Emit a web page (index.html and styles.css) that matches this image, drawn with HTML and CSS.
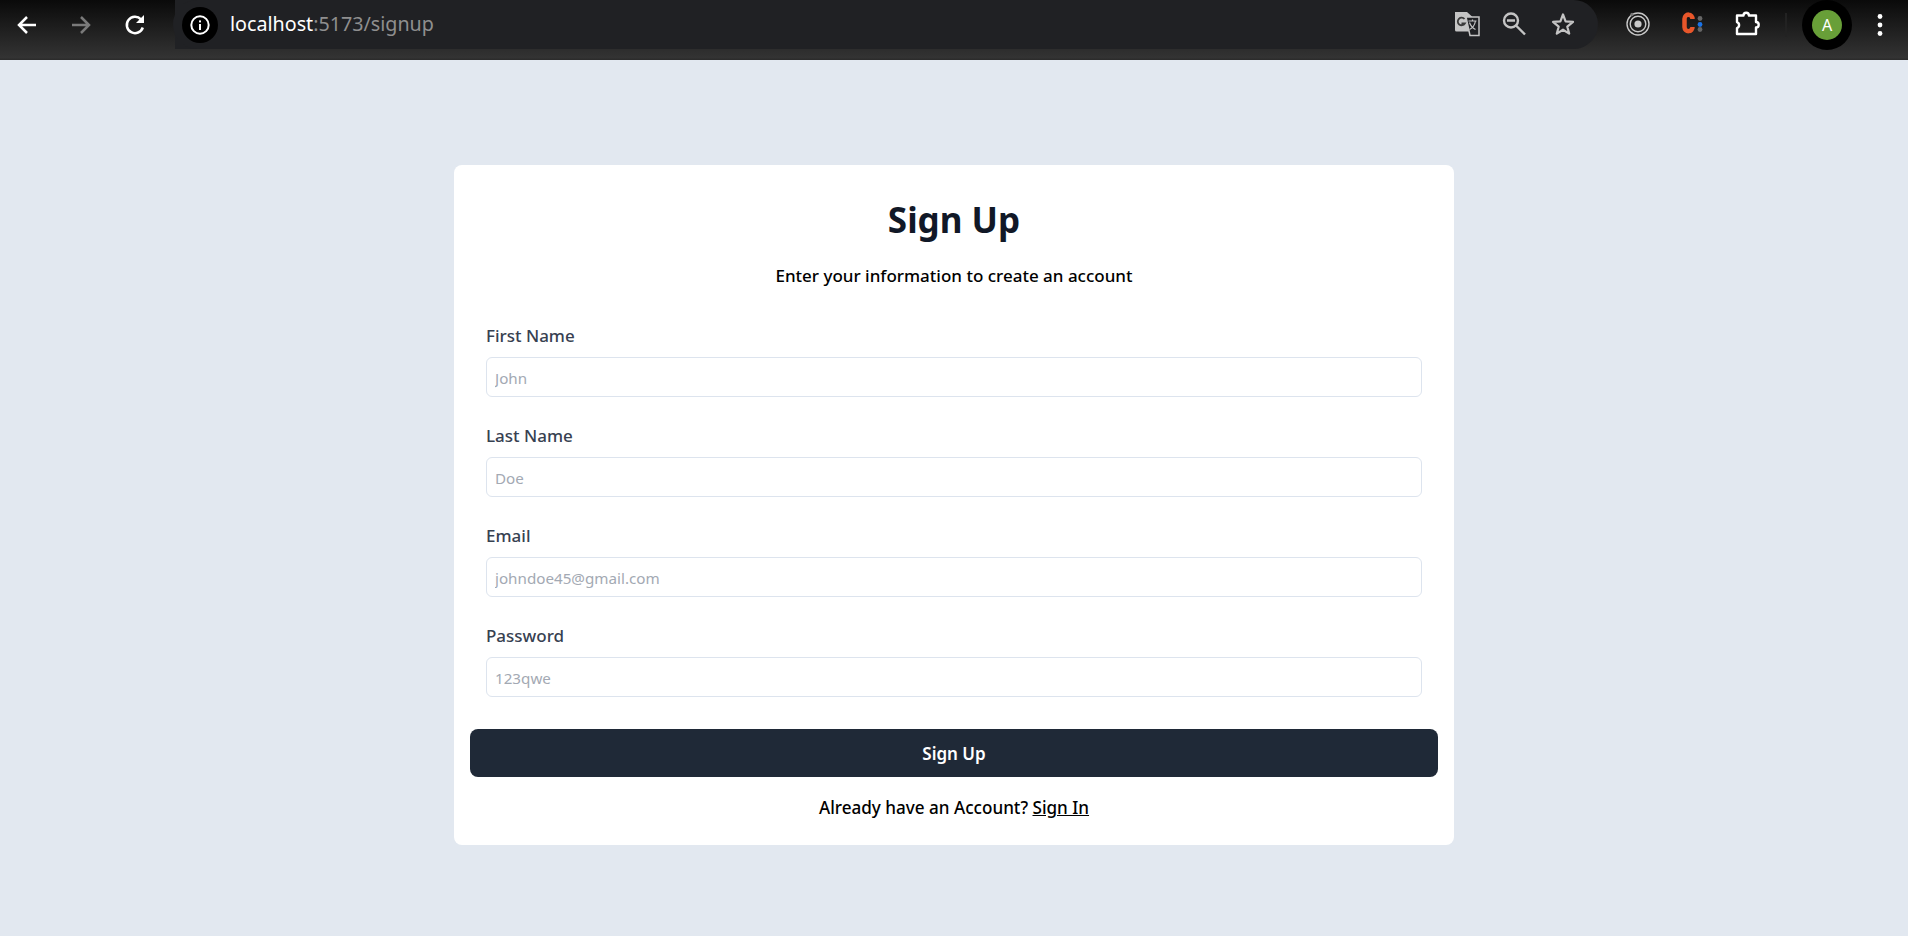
FILE: index.html
```html
<!DOCTYPE html>
<html lang="en">
<head>
<meta charset="utf-8">
<title>Sign Up</title>
<link rel="stylesheet" href="styles.css">
</head>
<body>
<header class="toolbar">
  <nav class="nav-buttons">
    <svg class="icon" viewBox="0 0 26 26"><path d="M22 13H5M13 5l-8 8 8 8" fill="none" stroke="#fff" stroke-width="2.500"/></svg>
    <svg class="icon" viewBox="0 0 26 26"><path d="M4 13h17M13 5l8 8-8 8" fill="none" stroke="#7a7a7a" stroke-width="2.500"/></svg>
    <svg class="icon" viewBox="0 0 26 26"><path d="M20.800 15.500A8.200 8.200 0 1 1 19 7.300" fill="none" stroke="#fff" stroke-width="2.500"/><path d="M22 3v8h-8z" fill="#fff"/></svg>
  </nav>
  <div class="omnibox">
    <span class="site-info"><svg viewBox="0 0 24 24" width="24" height="24"><circle cx="12" cy="12" r="8.700" fill="none" stroke="#fff" stroke-width="2"/><rect x="11" y="11" width="2" height="6" fill="#fff"/><rect x="11" y="7.400" width="2" height="2" fill="#fff"/></svg></span>
    <span class="url"><span class="host">localhost</span>:5173/signup</span>
    <span class="omni-actions">
      <svg class="icon" viewBox="0 0 26 26"><path d="M1 0h12l5 4.500v15H2.500A1.500 1.500 0 0 1 1 18z" fill="#c4c4c4"/><path d="M12 5h13v18.500H16z" fill="#202124" stroke="#c4c4c4" stroke-width="1.500"/><path d="M14.500 9h8M18.500 7.500V9M21.500 9c-.8 4-2.800 7-6 8.500M15.500 10.500c1 3 3 5.500 6 7" fill="none" stroke="#c4c4c4" stroke-width="1.200"/><path d="M10.500 7A3.800 3.800 0 1 0 10.800 11.500H7.500" fill="none" stroke="#3a3a3a" stroke-width="1.800"/></svg>
      <svg class="icon" viewBox="0 0 26 26"><circle cx="9" cy="8.500" r="7" fill="none" stroke="#c4c4c4" stroke-width="2.400"/><path d="M5 8.500h8M14 13.500l9 9" fill="none" stroke="#c4c4c4" stroke-width="2.400"/></svg>
      <svg class="icon" viewBox="0 0 26 26"><path d="M13 2.500l2.600 6.800 7.400.6-5.700 4.800 1.900 6.900-6.200-3.900-6.200 3.900 1.900-6.900L3 9.900l7.400-.6z" fill="none" stroke="#c4c4c4" stroke-width="2.200" stroke-linejoin="round"/></svg>
    </span>
  </div>
  <div class="extensions">
    <svg class="icon" viewBox="0 0 26 26"><circle cx="13" cy="12" r="11" fill="none" stroke="#c8c8c8" stroke-width="1.400"/><circle cx="13" cy="12" r="7.800" fill="none" stroke="#c8c8c8" stroke-width="1.400"/><circle cx="13" cy="12" r="3.600" fill="#c8c8c8"/><circle cx="7" cy="2.500" r="1.700" fill="#777"/></svg>
    <svg class="icon" viewBox="0 0 26 26"><path d="M13.500 7A4 4.250 0 0 0 5.500 6.750V15.250A4 4 0 0 0 13.500 15" fill="none" stroke="#e8562a" stroke-width="4.500"/><circle cx="21" cy="6.500" r="2.400" fill="#666"/><circle cx="21" cy="12.500" r="2.400" fill="#1a73e8"/><circle cx="21" cy="17.500" r="2.400" fill="#666"/></svg>
    <svg class="icon" viewBox="0 0 26 26"><path d="M4 3.500H10.500a2.700 2.700 0 0 1 5.400 0H23V10a2.700 2.700 0 0 1 0 5.400V22H4V16a3.200 3.200 0 0 0 0-6z" fill="none" stroke="#fff" stroke-width="2.400" stroke-linejoin="round"/></svg>
    <span class="divider"></span>
    <span class="avatar-ring"><span class="avatar">A</span></span>
    <svg class="menu" viewBox="0 0 6 24"><circle cx="3" cy="3.500" r="2.400" fill="#fff"/><circle cx="3" cy="12" r="2.400" fill="#fff"/><circle cx="3" cy="20.500" r="2.400" fill="#fff"/></svg>
  </div>
</header>
<main class="page">
  <form class="card">
    <h1 class="title">Sign Up</h1>
    <p class="subtitle">Enter your information to create an account</p>
    <div class="field"><label class="label">First Name</label><input class="input" placeholder="John"></div>
    <div class="field"><label class="label">Last Name</label><input class="input" placeholder="Doe"></div>
    <div class="field"><label class="label">Email</label><input class="input" placeholder="johndoe45@gmail.com"></div>
    <div class="field"><label class="label">Password</label><input class="input" placeholder="123qwe"></div>
    <button class="submit" type="button">Sign Up</button>
    <p class="footer-text">Already have an Account? <a class="link" href="#">Sign In</a></p>
  </form>
</main>
</body>
</html>
```
FILE: styles.css
```css
* { box-sizing: border-box; }
html, body { margin: 0; height: 100%; }
body {
  display: flex;
  flex-direction: column;
  height: 936px;
  overflow: hidden;
  background: #e2e8f0;
  font-family: "Noto Sans", sans-serif;
}
.toolbar {
  flex: 0 0 60px;
  display: flex;
  align-items: flex-start;
  background: linear-gradient(#0a0a0a, #333 96%, #2a2a2a);
}
.icon { width: 26px; height: 26px; flex: none; overflow: visible; }
.nav-buttons {
  width: 175px;
  height: 49px;
  display: flex;
  align-items: center;
  gap: 28px;
  padding-left: 14px;
}
.omnibox {
  width: 1423px;
  height: 49px;
  display: flex;
  align-items: center;
  background: #202124;
  border-radius: 0 25px 25px 0;
  position: relative;
}
.omnibox::before {
  content: "";
  position: absolute;
  left: -2px;
  top: 0;
  width: 30px;
  height: 49px;
  background: #202124;
  border-radius: 25px 0 0 25px;
}
.site-info {
  position: relative;
  width: 36px;
  height: 36px;
  margin-left: 7px;
  border-radius: 50%;
  background: #000;
  display: flex;
  align-items: center;
  justify-content: center;
}
.url {
  position: relative;
  margin-left: 12px;
  padding-bottom: 2px;
  font-size: 19.700px;
  color: #8f8f8f;
}
.host { color: #fff; }
.omni-actions {
  margin-left: auto;
  margin-right: 22px;
  display: flex;
  align-items: center;
  gap: 22px;
}
.extensions {
  flex: 1;
  height: 49px;
  display: flex;
  align-items: center;
  padding-left: 27px;
  gap: 28px;
}
.divider { width: 2px; height: 24px; background: #222; margin: 0 -2px; }
.avatar-ring {
  width: 50px;
  height: 50px;
  margin-left: -11px;
  border-radius: 50%;
  background: #000;
  display: flex;
  align-items: center;
  justify-content: center;
}
.avatar {
  width: 30px;
  height: 30px;
  border-radius: 50%;
  background: #689f38;
  color: #fff;
  font-size: 16px;
  display: flex;
  align-items: center;
  justify-content: center;
}
.menu { width: 6px; height: 24px; margin-left: -3px; }
.page {
  flex: 1;
  display: flex;
  justify-content: center;
  align-items: flex-start;
  padding-top: 105px;
}
.card {
  width: 1000px;
  height: 680px;
  background: #fff;
  border-radius: 8px;
  padding: 33px 16px 0;
  display: flex;
  flex-direction: column;
  align-items: center;
}
.title {
  margin: 0;
  font-size: 35px;
  line-height: 44px;
  font-weight: 700;
  color: #111827;
}
.subtitle {
  margin: 22px 0 0;
  font-size: 17px;
  line-height: 24px;
  font-weight: 500;
  color: #000;
}
.field {
  align-self: stretch;
  margin: 0 16px;
  display: flex;
  flex-direction: column;
  height: 100px;
  padding-top: 16px;
}
.subtitle + .field { margin-top: 20px; }
.label {
  font-size: 17px;
  line-height: 24px;
  font-weight: 500;
  color: #374151;
  margin-bottom: 9px;
}
.input {
  height: 40px;
  width: 100%;
  border: 1px solid #dde4ee;
  border-radius: 6px;
  padding: 1px 8px 0;
  font: 15.200px "Noto Sans", sans-serif;
  outline: none;
}
.input::placeholder { color: #a3a9b3; opacity: 1; }
.submit {
  align-self: stretch;
  height: 48px;
  margin-top: 21px;
  border: 0;
  border-radius: 8px;
  background: #1f2937;
  color: #fff;
  font: 600 17px "Noto Sans", sans-serif;
}
.footer-text {
  margin: 19px 0 0;
  font-size: 17.100px;
  line-height: 24px;
  font-weight: 500;
  color: #000;
}
.link { color: #000; text-decoration: underline; }
```
